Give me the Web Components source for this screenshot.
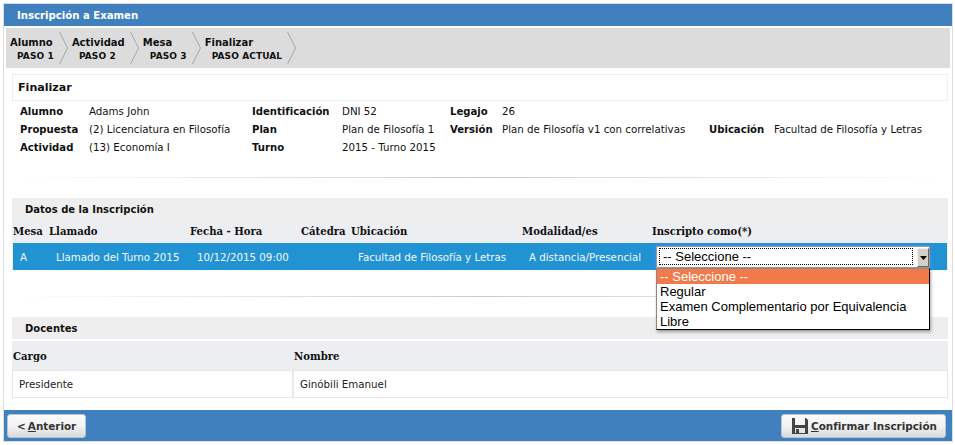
<!DOCTYPE html>
<html lang="es"><head><meta charset="utf-8"><title>Inscripción a Examen</title>
<style>
html,body{margin:0;padding:0;background:#fff;height:445px;overflow:hidden}
body{font:10.25px "DejaVu Sans",sans-serif;color:#111}
</style></head><body>
<template id="t-frame"><style>
:host{display:flex;flex-direction:column;box-sizing:border-box;width:950px;height:439px;margin:3px 0 0 3px;border:1px solid #ddd}
.title{height:22px;background:#4080bf;color:#fff;font:bold 10.15px/24px "DejaVu Sans",sans-serif;padding-left:13px;flex:none}
.body{flex:1;display:flex;flex-direction:column;padding:2px 0 0;min-height:0}
.foot{height:31px;flex:none;background:#4080bf;display:flex;justify-content:space-between;align-items:center;padding:0 6px 0 3px}
</style><div class="title" part="title"><slot name="title"></slot></div><div class="body"><slot></slot></div><div class="foot"><slot name="foot"></slot></div></template>

<template id="t-steps"><style>
:host{display:flex;height:40px;margin:0 2px;background:#dcdcdc;padding-left:4px;gap:4px;flex:none}
</style><slot></slot></template>

<template id="t-step"><style>
:host{display:flex;gap:0;color:#111}
.t{padding-right:5px;display:flex;flex-direction:column}
.a{font:bold 10px/14px "DejaVu Sans",sans-serif;margin-top:8px}
.b{font:bold 9px/13px "DejaVu Sans",sans-serif;padding-left:7px;letter-spacing:.1px}
svg{display:block;margin-top:4px}
</style><div class="t"><div class="a"><slot></slot></div><div class="b"><slot name="sub"></slot></div></div>
<svg width="9" height="32" viewBox="0 0 9 32"><path d="M.5 0 8.500 16 .5 32" fill="none" stroke="#a8a8a8" stroke-width="1"/></svg></template>

<template id="t-box"><style>
:host{display:block;box-sizing:border-box;height:27px;margin:6px 4px 0 8px;border:1px dotted #e2e2e2;font:bold 11.1px/26px "DejaVu Sans",sans-serif;padding-left:5px;flex:none}
</style><slot></slot></template>

<template id="t-info"><style>
:host{display:grid;grid-template-columns:69px 163px 90px 108px 52px 207px 65px auto;grid-auto-rows:18px;margin:1px 0 0 16px;flex:none;height:54px;font-size:10.25px;line-height:18px}
::slotted(b){font-size:10.1px;line-height:20px}
</style><slot></slot></template>

<template id="t-rule"><style>
:host{display:block;height:1px;flex:none;background:linear-gradient(90deg,#fff 0,#ccc 50%,#fff 100%);margin:0 4px 0 8px}
</style></template>

<template id="t-section"><style>
:host{display:block;height:22px;margin:0 4px 0 8px;background:#eee;font:bold 10px/24px "DejaVu Sans",sans-serif;padding-left:13px;flex:none;color:#111}
</style><slot></slot></template>

<template id="t-table"><style>
:host{display:block;margin:0 4px 0 8px;flex:none;background:#edeef1}
.g{display:grid;grid-template-columns:var(--cols);padding:var(--tp,0)}
</style><div class="g"><slot></slot></div></template>

<template id="t-hcell"><style>
:host{display:block;height:var(--h,23px);font:bold 10.1px/var(--lh,23px) "DejaVu Serif",serif;padding-left:var(--pl,0);color:#111;white-space:nowrap}
</style><slot></slot></template>

<template id="t-cell"><style>
:host{display:flex;align-items:center;white-space:nowrap;font-size:10.25px;box-sizing:border-box;height:var(--ch,27px);padding-left:var(--cpl,7px);background:var(--cbg,#fff);color:var(--cfg,#222);border:var(--cb,none);position:relative}
</style><slot></slot></template>

<template id="t-select"><style>
:host{display:block;position:relative;width:274px;height:22px;font:13px "Liberation Sans",Arial,sans-serif;color:#000}
.sel{box-sizing:border-box;height:22px;display:flex;background:#fff;border:1px solid #9a9a9a;box-shadow:0 0 3px 1px #3f8fe8;padding:1px 0 1px 2px}
.val{flex:1;border:1px dotted #000;line-height:16px;padding-left:0;box-sizing:border-box;height:17px}
.btn{width:12px;margin-left:4px;height:19px;background:#d4d0c8;border:1px solid;border-color:#eee #666 #666 #eee;box-sizing:border-box;display:flex;align-items:center;justify-content:center}
.btn svg{display:block}
.pop{position:absolute;left:0;top:22px;width:274px;box-sizing:border-box;background:#fff;border:1px solid #000;border-top-color:#888;border-left-color:#888;box-shadow:1px 2px 3px rgba(0,0,0,.35);z-index:5}
::slotted(*){display:block;height:15px;line-height:15px;padding-left:3px}
</style><div class="sel"><div class="val"><slot name="value"></slot></div><div class="btn"><svg width="7" height="4" viewBox="0 0 7 4"><path d="M0 0h7L3.500 4z" fill="#000"/></svg></div></div>
<div class="pop"><slot></slot></div></template>

<template id="t-btn"><style>
:host{display:inline-flex;align-items:center;box-sizing:border-box;height:24px;background:linear-gradient(#fbfbfb,#f2f2f2 50%,#d9d9d9);border:1px solid #b9c4cf;border-radius:3px;font:bold 10.4px "DejaVu Sans",sans-serif;color:#333;padding:0 0 0 var(--pl,10px);gap:3px;width:var(--w,auto)}
</style><slot name="icon"></slot><span><slot></slot></span></template>

<app-frame>
  <span slot="title">Inscripción a Examen</span>
  <step-bar>
    <step-item>Alumno<span slot="sub">PASO 1</span></step-item>
    <step-item>Actividad<span slot="sub">PASO 2</span></step-item>
    <step-item>Mesa<span slot="sub">PASO 3</span></step-item>
    <step-item>Finalizar<span slot="sub">PASO ACTUAL</span></step-item>
  </step-bar>
  <title-box>Finalizar</title-box>
  <info-grid>
    <b>Alumno</b><span>Adams John</span><b>Identificación</b><span>DNI 52</span><b>Legajo</b><span>26</span><i></i><i></i>
    <b>Propuesta</b><span>(2) Licenciatura en Filosofía</span><b>Plan</b><span>Plan de Filosofía 1</span><b>Versión</b><span>Plan de Filosofía v1 con correlativas</span><b>Ubicación</b><span>Facultad de Filosofía y Letras</span>
    <b>Actividad</b><span>(13) Economía I</span><b>Turno</b><span>2015 - Turno 2015</span>
  </info-grid>
  <soft-rule style="margin-top:21px"></soft-rule>
  <section-head style="margin-top:20px">Datos de la Inscripción</section-head>
  <data-table style="--tp:0 1px;--cols:36px 141px 111px 50px 171px 130px 1fr;--cfg:#f4f8fb;--cbg:#2193d3;--ch:27px">
    <head-cell>Mesa</head-cell><head-cell>Llamado</head-cell><head-cell>Fecha - Hora</head-cell><head-cell>Cátedra</head-cell><head-cell>Ubicación</head-cell><head-cell>Modalidad/es</head-cell><head-cell>Inscripto como(*)</head-cell>
    <body-cell>A</body-cell><body-cell>Llamado del Turno 2015</body-cell><body-cell>10/12/2015 09:00</body-cell><body-cell></body-cell><body-cell>Facultad de Filosofía y Letras</body-cell><body-cell>A distancia/Presencial</body-cell>
    <body-cell style="--cpl:4px;align-items:flex-start;padding-top:3px">
      <fake-select>
        <span slot="value">-- Seleccione --</span>
        <span style="background:#f27a4a;color:#fff">-- Seleccione --</span>
        <span>Regular</span>
        <span>Examen Complementario por Equivalencia</span>
        <span>Libre</span>
      </fake-select>
    </body-cell>
  </data-table>
  <soft-rule style="margin-top:26px"></soft-rule>
  <section-head style="margin-top:20px">Docentes</section-head>
  <data-table style="margin-top:2px;--cols:281px 1fr;--h:29px;--lh:31px;--pl:1px;--ch:28px;--cpl:6px;--cb:1px solid #e8e8e8;--cfg:#222">
    <head-cell>Cargo</head-cell><head-cell>Nombre</head-cell>
    <body-cell>Presidente</body-cell><body-cell>Ginóbili Emanuel</body-cell>
  </data-table>
  <push-button slot="foot" style="--w:79px;--pl:9px"><span style="word-spacing:-1.5px">&lt; <u>A</u>nterior</span></push-button>
  <push-button slot="foot" style="--w:165px">
    <svg slot="icon" width="16" height="16" viewBox="0 0 16 16"><path fill="#444" d="M0 0h3v7h10V0h1l2 2v14H0z"/><path fill="#e6e6e6" d="M3 10h10v5H3z"/><path fill="#444" d="M4 11h3v4H4z"/></svg>
    <span><u>C</u>onfirmar Inscripción</span></push-button>
</app-frame>
<script>
const map={'app-frame':'t-frame','step-bar':'t-steps','step-item':'t-step','title-box':'t-box','info-grid':'t-info','soft-rule':'t-rule','section-head':'t-section','data-table':'t-table','head-cell':'t-hcell','body-cell':'t-cell','fake-select':'t-select','push-button':'t-btn'};
for(const [n,t] of Object.entries(map)){
  customElements.define(n,class extends HTMLElement{constructor(){super();this.attachShadow({mode:'open'}).appendChild(document.getElementById(t).content.cloneNode(true))}});
}
</script>
</body></html>
